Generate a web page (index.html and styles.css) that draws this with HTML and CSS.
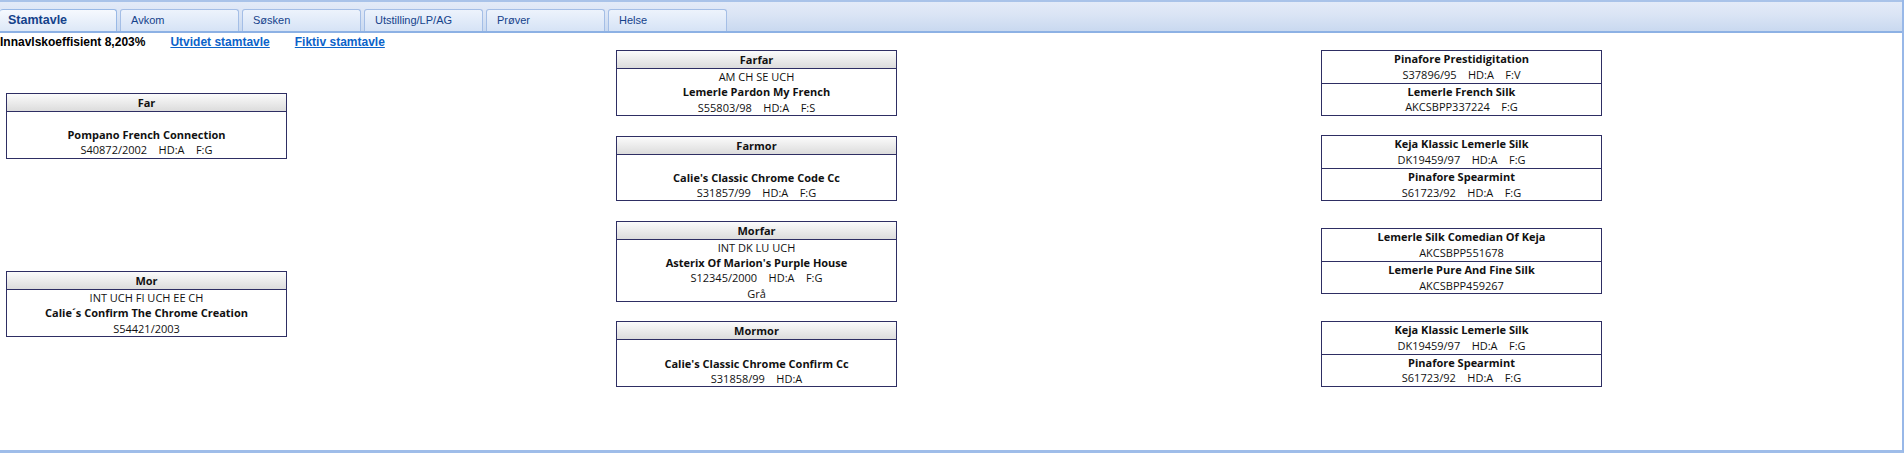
FILE: index.html
```html
<!DOCTYPE html>
<html lang="no">
<head>
<meta charset="utf-8">
<title>Stamtavle</title>
<link rel="stylesheet" href="styles.css">
</head>
<body>
<div class="window">
  <div class="tabstrip">
    <div class="tab tab-active">Stamtavle</div>
    <div class="tab">Avkom</div>
    <div class="tab">Søsken</div>
    <div class="tab">Utstilling/LP/AG</div>
    <div class="tab">Prøver</div>
    <div class="tab">Helse</div>
  </div>
  <div class="content">
    <div class="info">
      <span class="coef">Innavlskoeffisient 8,203%</span>
      <a class="link" href="#">Utvidet stamtavle</a>
      <a class="link" href="#">Fiktiv stamtavle</a>
    </div>
    <div class="pedigree">
      <div class="box far">
        <div class="box-head">Far</div>
        <div class="box-body">
          <div class="line"></div>
          <div class="line name">Pompano French Connection</div>
          <div class="line">S40872/2002    HD:A    F:G</div>
        </div>
      </div>
      <div class="box mor">
        <div class="box-head">Mor</div>
        <div class="box-body">
          <div class="line">INT UCH FI UCH EE CH</div>
          <div class="line name">Calie´s Confirm The Chrome Creation</div>
          <div class="line">S54421/2003</div>
        </div>
      </div>

      <div class="box c2 r1">
        <div class="box-head">Farfar</div>
        <div class="box-body">
          <div class="line">AM CH SE UCH</div>
          <div class="line name">Lemerle Pardon My French</div>
          <div class="line">S55803/98    HD:A    F:S</div>
        </div>
      </div>
      <div class="box c2 r2">
        <div class="box-head">Farmor</div>
        <div class="box-body">
          <div class="line"></div>
          <div class="line name">Calie's Classic Chrome Code Cc</div>
          <div class="line">S31857/99    HD:A    F:G</div>
        </div>
      </div>
      <div class="box c2 r3">
        <div class="box-head">Morfar</div>
        <div class="box-body">
          <div class="line">INT DK LU UCH</div>
          <div class="line name">Asterix Of Marion's Purple House</div>
          <div class="line">S12345/2000    HD:A    F:G</div>
          <div class="line">Grå</div>
        </div>
      </div>
      <div class="box c2 r4">
        <div class="box-head">Mormor</div>
        <div class="box-body">
          <div class="line"></div>
          <div class="line name">Calie's Classic Chrome Confirm Cc</div>
          <div class="line">S31858/99    HD:A</div>
        </div>
      </div>

      <div class="box c3 r1">
        <div class="sect">
          <div class="line name">Pinafore Prestidigitation</div>
          <div class="line">S37896/95    HD:A    F:V</div>
        </div>
        <div class="sect">
          <div class="line name">Lemerle French Silk</div>
          <div class="line">AKCSBPP337224    F:G</div>
        </div>
      </div>
      <div class="box c3 r2">
        <div class="sect">
          <div class="line name">Keja Klassic Lemerle Silk</div>
          <div class="line">DK19459/97    HD:A    F:G</div>
        </div>
        <div class="sect">
          <div class="line name">Pinafore Spearmint</div>
          <div class="line">S61723/92    HD:A    F:G</div>
        </div>
      </div>
      <div class="box c3 r3">
        <div class="sect">
          <div class="line name">Lemerle Silk Comedian Of Keja</div>
          <div class="line">AKCSBPP551678</div>
        </div>
        <div class="sect">
          <div class="line name">Lemerle Pure And Fine Silk</div>
          <div class="line">AKCSBPP459267</div>
        </div>
      </div>
      <div class="box c3 r4">
        <div class="sect">
          <div class="line name">Keja Klassic Lemerle Silk</div>
          <div class="line">DK19459/97    HD:A    F:G</div>
        </div>
        <div class="sect">
          <div class="line name">Pinafore Spearmint</div>
          <div class="line">S61723/92    HD:A    F:G</div>
        </div>
      </div>
    </div>
  </div>
</div>
</body>
</html>
```

FILE: styles.css
```css
* { box-sizing: border-box; }
html, body { margin: 0; padding: 0; background: #ffffff; }

.window {
  width: 1904px;
  height: 453px;
  border-right: 2px solid #98b8e8;
  border-bottom: 3px solid #9fbde9;
  display: flex;
  flex-direction: column;
  overflow: hidden;
}

.tabstrip {
  height: 33px;
  flex: none;
  display: flex;
  align-items: flex-end;
  gap: 3px;
  border-top: 2px solid #a9c3e9;
  border-bottom: 2px solid #8db1e4;
  background: linear-gradient(#e3ebf8 0px, #dbe5f5 12px, #c9d9f0 100%);
}

.tab {
  width: 119px;
  height: 22px;
  padding-left: 10px;
  font: 11px "Liberation Sans", Arial, sans-serif;
  line-height: 21px;
  color: #15428b;
  border: 1px solid #a4bee6;
  border-bottom: none;
  border-radius: 3px 3px 0 0;
  background: linear-gradient(#edf3fc, #d6e3f6);
}

.tab-active {
  width: 117px;
  padding-left: 8px;
  font-weight: bold;
  font-size: 12.5px;
  border-left: none;
  border-color: #99b9e6;
  background: linear-gradient(#f6f9fe, #dde8f7);
}

.content {
  flex: 1;
  padding-top: 2px;
  background: #ffffff;
}

.info {
  height: 15px;
  display: flex;
  gap: 25px;
  font: bold 12px "Liberation Sans", Arial, sans-serif;
  line-height: 15px;
  color: #000;
}

.link {
  color: #0b63c9;
  text-decoration: underline;
}

.pedigree {
  display: grid;
  grid-template-columns: 610px 705px 281px;
  grid-template-rows: auto auto auto auto;
  row-gap: 19.4px;
  padding-left: 6px;
}

.box {
  width: 281px;
  border: 1px solid #2e2e63;
  background: #fff;
  text-align: center;
  font: 11px "Open Sans", "Liberation Sans", sans-serif;
  color: #111;
  align-self: center;
}

.box-head {
  height: 18px;
  line-height: 17px;
  border-bottom: 1px solid #2e2e63;
  background: linear-gradient(#fbfbfb, #dcdcdc);
  font-weight: bold;
}

.line {
  height: 15.25px;
  line-height: 15.25px;
  white-space: pre;
}

.sect .line {
  height: 15.75px;
  line-height: 15.75px;
}

.name { font-weight: bold; }

.sect + .sect { border-top: 1px solid #2e2e63; }

.far { grid-column: 1; grid-row: 1 / 3; }
.mor { grid-column: 1; grid-row: 3 / 5; }
.c2 { grid-column: 2; }
.c3 { grid-column: 3; }
.r1 { grid-row: 1; }
.r2 { grid-row: 2; }
.r3 { grid-row: 3; }
.r4 { grid-row: 4; }
```
